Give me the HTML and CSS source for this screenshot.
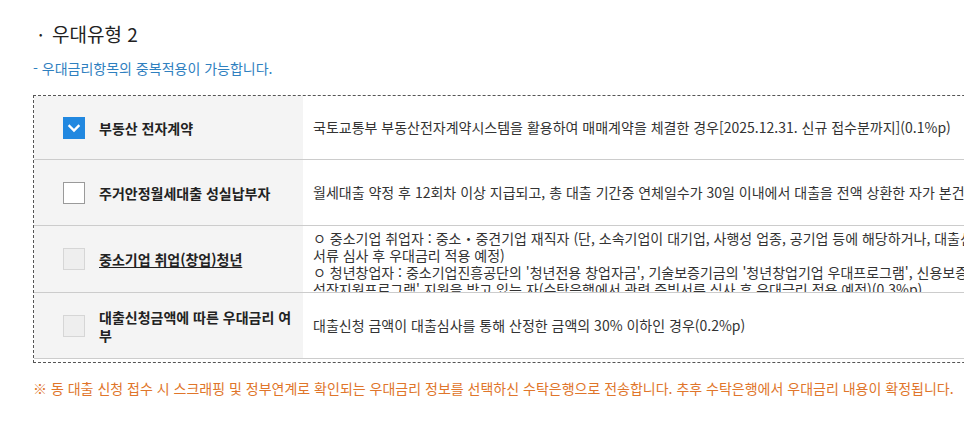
FILE: index.html
```html
<!DOCTYPE html>
<html lang="ko">
<head>
<meta charset="utf-8">
<title>우대유형 2</title>
<link rel="stylesheet" href="styles.css">
</head>
<body>
<div class="page">
  <h2 class="title"><span class="dot">•</span>우대유형 2</h2>
  <p class="sub">- 우대금리항목의 중복적용이 가능합니다.</p>
  <div class="box">
    <div class="row row-first">
      <div class="lab">
        <span class="cb cb-on"><svg viewBox="0 0 22 22" width="22" height="22"><path d="M6.5 9 L11 13.5 L15.5 9" fill="none" stroke="#fff" stroke-width="2.4" stroke-linecap="square"/></svg></span>
        <span class="name">부동산 전자계약</span>
      </div>
      <div class="desc"><span class="line">국토교통부 부동산전자계약시스템을 활용하여 매매계약을 체결한 경우[2025.12.31. 신규 접수분까지](0.1%p)</span></div>
    </div>
    <div class="row">
      <div class="lab">
        <span class="cb"></span>
        <span class="name">주거안정월세대출 성실납부자</span>
      </div>
      <div class="desc"><span class="line">월세대출 약정 후 12회차 이상 지급되고, 총 대출 기간중 연체일수가 30일 이내에서 대출을 전액 상환한 자가 본건 대출을 신청하는 경우(0.2%p)</span></div>
    </div>
    <div class="row row-tall">
      <div class="lab">
        <span class="cb cb-off"></span>
        <span class="name name-link">중소기업 취업(창업)청년</span>
      </div>
      <div class="desc desc-multi">
        <span class="line">ㅇ 중소기업 취업자 : 중소・중견기업 재직자 (단, 소속기업이 대기업, 사행성 업종, 공기업 등에 해당하거나, 대출신청인이 대표자인 경우 제외, 수탁은행에서 관련 증빙</span>
        <span class="line">서류 심사 후 우대금리 적용 예정)</span>
        <span class="line">ㅇ 청년창업자 : 중소기업진흥공단의 '청년전용 창업자금', 기술보증기금의 '청년창업기업 우대프로그램', 신용보증재단의 '청년창업 특례보증' 등 정부의 청년창업</span>
        <span class="line">성장지원프로그램' 지원을 받고 있는 자(수탁은행에서 관련 증빙서류 심사 후 우대금리 적용 예정)(0.3%p)</span>
      </div>
    </div>
    <div class="row">
      <div class="lab">
        <span class="cb cb-off"></span>
        <span class="name name-wrap">대출신청금액에 따른 우대금리 여부</span>
      </div>
      <div class="desc"><span class="line">대출신청 금액이 대출심사를 통해 산정한 금액의 30% 이하인 경우(0.2%p)</span></div>
    </div>
  </div>
  <p class="note">※ 동 대출 신청 접수 시 스크래핑 및 정부연계로 확인되는 우대금리 정보를 선택하신 수탁은행으로 전송합니다. 추후 수탁은행에서 우대금리 내용이 확정됩니다.</p>
</div>
</body>
</html>
```

FILE: styles.css
```css
html, body {
  margin: 0;
  padding: 0;
  background: #fff;
  overflow: hidden;
}
body {
  font-family: "Noto Sans CJK KR", "Noto Sans", sans-serif;
  color: #333;
  width: 964px;
}
.page {
  padding: 21px 0 0 33px;
}
.title {
  margin: 0;
  font-size: 19px;
  font-weight: 400;
  line-height: 26px;
  color: #222;
  display: flex;
  align-items: center;
}
.dot {
  font-size: 10px;
  width: 19px;
  padding-left: 6px;
  box-sizing: border-box;
}
.sub {
  margin: 12px 0 0 0;
  font-size: 14px;
  line-height: 18px;
  color: #2f80bf;
}
.box {
  margin-top: 18px;
  width: 1100px;
  border: 1px dashed #555;
  padding-bottom: 3px;
}
.row {
  display: flex;
  height: 65px;
  border-bottom: 1px solid #cccccc;
}
.row-first { height: 63px; }
.row-tall { height: 66px; }
.lab {
  width: 269px;
  flex: none;
  background: #f4f4f4;
  display: flex;
  align-items: center;
  padding-left: 29px;
  box-sizing: border-box;
  gap: 14px;
}
.cb {
  flex: none;
  width: 22px;
  height: 22px;
  box-sizing: border-box;
  border: 1px solid #9a9a9a;
  background: #fff;
  display: block;
}
.cb svg { display: block; }
.cb-on {
  background: #2188e0;
  border: none;
}
.cb-off {
  background: #eeeeee;
  border: 1px solid #d6d6d6;
}
.name {
  font-size: 14px;
  font-weight: 700;
  color: #222;
  line-height: 18px;
}
.name-link {
  text-decoration: underline;
  text-underline-offset: 2px;
}
.name-wrap {
  width: 196px;
}
.desc {
  flex: 1;
  display: flex;
  flex-direction: column;
  justify-content: center;
  padding-left: 10px;
  font-size: 14px;
  line-height: 17px;
  color: #333;
  overflow: hidden;
}
.desc-multi {
  justify-content: flex-start;
  padding-top: 4px;
}
.line {
  white-space: nowrap;
  display: block;
}
.note {
  margin: 16px 0 0 0;
  font-size: 14px;
  line-height: 18px;
  color: #e0752a;
  white-space: nowrap;
}
```
